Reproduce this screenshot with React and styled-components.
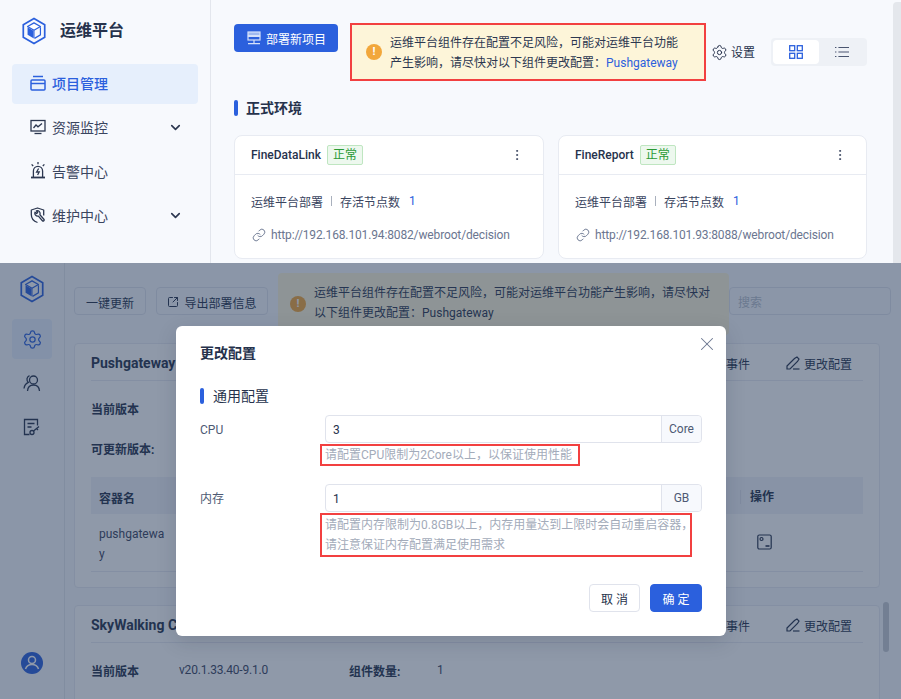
import React from "react";
import styled, { createGlobalStyle } from "styled-components";
import { Settings, ChevronDown, EllipsisVertical, Link, X, SquareArrowOutUpRight } from "lucide-react";

const GlobalStyle = createGlobalStyle`
  html, body { margin: 0; padding: 0; background: #fff; }
  body { font-family: Roboto, "Noto Sans CJK SC", "Noto Sans", sans-serif; font-size: 12px; color: #1f2a44; overflow: hidden; }
  * { box-sizing: border-box; }
`;

const Logo = () => (
  <svg width="24" height="28" viewBox="0 0 28 32">
    <path d="M14 1.5 26.5 8.7v14.6L14 30.5 1.5 23.3V8.7z" fill="none" stroke="#2b60dd" strokeWidth="2" />
    <path d="M14 6.5 21.5 10.8 14 15.2 6.5 10.8z" fill="#fff" stroke="#2b60dd" strokeWidth="1.4" strokeLinejoin="round" />
    <path d="M6.5 11.5 13.4 15.6v9L6.500 20.500z" fill="#2b60dd" />
    <path d="M21.5 11.5v9L14.6 24.6" fill="none" stroke="#2b60dd" strokeWidth="1.4" />
    <path d="M14 15.5v9" stroke="#2b60dd" strokeWidth="1.2" />
  </svg>
);

const ProjectIcon = () => (
  <svg width="16" height="16" viewBox="0 0 16 16" fill="none" stroke="#2b60dd" strokeWidth="1.5">
    <path d="M3 1.500h10" />
    <rect x="1" y="5" width="14" height="10" rx="1" />
    <path d="M1 8.500h14" />
  </svg>
);

const MonitorIcon = () => (
  <svg width="16" height="16" viewBox="0 0 16 16" fill="none" stroke="#2c3750" strokeWidth="1.3">
    <rect x="1" y="1.500" width="14" height="10.500" />
    <path d="M3.500 9 6 6l2 1.800L12 4.500" />
    <path d="M4.500 14.500h7" />
  </svg>
);

const AlarmIcon = () => (
  <svg width="16" height="18" viewBox="0 0 16 18" fill="none" stroke="#2c3750" strokeWidth="1.3">
    <path d="M8 0v2.200M1.600 2.400l1.600 1.600M14.400 2.400l-1.600 1.600" />
    <path d="M3.400 15V9a4.600 4.600 0 0 1 9.200 0v6" />
    <path d="M1 15.500h14" strokeWidth="1.800" />
    <path d="M8.600 6.500 6.600 10h2.600l-1.600 3" />
  </svg>
);

const MaintainIcon = () => (
  <svg width="16" height="17" viewBox="0 0 16 17" fill="none" stroke="#2c3750" strokeWidth="1.3" strokeLinejoin="round">
    <path d="M7.500 15.500C3.800 14.400 1.300 11.600 1.300 7.600V3L7.500 1l6.200 2v5.500" />
    <path d="M5 5.200a2.900 2.900 0 0 0 3.400 3.900l4 4.600c.9.900 2.400-.4 1.500-1.400l-4-4.600A2.900 2.900 0 0 0 6.400 3.800l1.300 1.800-1.100 1z" />
  </svg>
);

const ServerIcon = () => (
  <svg width="14" height="14" viewBox="0 0 14 14" fill="none" stroke="#d5e1fa" strokeWidth="1.2">
    <rect x="1" y="1" width="12" height="3.600" fill="#9fb9f0" />
    <rect x="1" y="5.400" width="12" height="3.600" />
    <path d="M7 9v3M1 12.600h12" />
  </svg>
);

const GridIcon = () => (
  <svg width="14" height="14" viewBox="0 0 14 14" fill="none" stroke="#2b60dd" strokeWidth="1.3">
    <rect x="0.700" y="0.700" width="5" height="5" />
    <rect x="8.300" y="0.700" width="5" height="5" />
    <rect x="0.700" y="8.300" width="5" height="5" />
    <rect x="8.300" y="8.300" width="5" height="5" />
  </svg>
);

const ListIcon = () => (
  <svg width="14" height="12" viewBox="0 0 14 12" fill="none" stroke="#4a5570" strokeWidth="1.1">
    <path d="M3.400 1.500H14M3.400 6H14M3.400 10.500H14" />
    <path d="M0 1.500h1.400M0 6h1.400M0 10.500h1.400" />
  </svg>
);

const UsersIcon = () => (
  <svg width="18" height="18" viewBox="0 0 18 18" fill="none" stroke="#26324c" strokeWidth="1.300">
    <circle cx="10.500" cy="6" r="4" />
    <path d="M4.500 17c.3-3.800 2.700-6 6-6s5.700 2.200 6 6" />
    <path d="M6.500 1.600A4 4 0 0 0 5.400 8.400C3 9.400 1.400 11.600 1 14.500" />
  </svg>
);

const DocKeyIcon = () => (
  <svg width="18" height="18" viewBox="0 0 18 18" fill="none" stroke="#26324c" strokeWidth="1.300">
    <path d="M6.500 16.500H1.500v-15h13v6" />
    <path d="M4.500 5.500h7M4.500 9h4" />
    <circle cx="9" cy="14.500" r="2" />
    <path d="M10.500 13 16 8.500M13.500 10.500l1.500 1.500" />
  </svg>
);

const PencilIcon = () => (
  <svg width="14" height="14" viewBox="0 0 14 14" fill="none" stroke="#26324c" strokeWidth="1.200">
    <path d="M1 10 8.500 2.500 11 1l2 2-1.500 2.500L4 13H1z" />
    <path d="M7 13h6.500" />
  </svg>
);

const TerminalIcon = () => (
  <svg width="15" height="16" viewBox="0 0 15 16" fill="none" stroke="#26324c" strokeWidth="1.200">
    <rect x="0.800" y="1" width="13.400" height="14" rx="1.500" />
    <circle cx="4.500" cy="5" r="1.500" />
    <path d="M8.500 12h4" strokeWidth="1.600" />
  </svg>
);

const UserBadge = () => (
  <svg width="22" height="22" viewBox="0 0 22 22">
    <circle cx="11" cy="11" r="11" fill="#2b60dd" />
    <circle cx="11" cy="8" r="3.500" fill="none" stroke="#fff" strokeWidth="1.500" />
    <path d="M4.500 17c1-3 3.500-4.500 6.500-4.500s5.500 1.500 6.500 4.500" fill="none" stroke="#fff" strokeWidth="1.500" />
  </svg>
);

const Shot = styled.div`
  position: relative;
  display: flex;
  height: ${(p) => p.$height}px;
  overflow: hidden;
  background: #f7f9fd;
`;

const Sidebar = styled.aside`
  width: 211px;
  flex: none;
  border-right: 1px solid #e3e6ed;
  padding: 17px 12px 0;
`;

const Brand = styled.div`
  display: flex;
  align-items: center;
  gap: 14px;
  height: 27px;
  padding-left: 10px;
  margin-bottom: 20px;
  font-size: 16px;
  font-weight: 700;
  color: #26324c;
`;

const BrandName = styled.span`
  margin-top: -3px;
`;

const NavItem = styled.div`
  display: flex;
  align-items: center;
  height: 40px;
  margin-bottom: 4px;
  padding: 0 15px 2px 18px;
  gap: 6px;
  font-size: 14px;
  border-radius: 4px;
  color: ${(p) => (p.$active ? "#2b60dd" : "#3a455f")};
  background: ${(p) => (p.$active ? "#e6effc" : "transparent")};
  font-weight: ${(p) => (p.$active ? 500 : 400)};
  span { flex: 1; }
`;

const Main = styled.main`
  flex: 1;
  padding: 23px 34px 0 23px;
  min-width: 0;
`;

const Toolbar = styled.div`
  display: flex;
  align-items: flex-start;
`;

const PrimaryButton = styled.button`
  display: flex;
  align-items: center;
  gap: 5px;
  width: 104px;
  height: 28px;
  margin-top: 1px;
  padding: 0 0 0 13px;
  border: 0;
  border-radius: 4px;
  background: #2b60dd;
  color: #fff;
  font: inherit;
`;

const WarnMark = styled.div`
  width: 16px;
  height: 16px;
  flex: none;
  border-radius: 50%;
  background: #f2a73b;
  color: #fff;
  font-size: 11px;
  font-weight: 700;
  line-height: 16px;
  text-align: center;
`;

const WarnBox = styled.div`
  width: 356px;
  height: 58px;
  margin-left: 12px;
  display: flex;
  align-items: center;
  gap: 8px;
  padding-left: 14px;
  background: #fdf5d9;
  border: 2px solid #f24040;
  line-height: 20px;
  color: #2c3750;
  a { color: #2b60dd; }
  div + div { padding-top: 2px; }
`;

const SettingsLink = styled.div`
  display: flex;
  flex: none;
  align-items: center;
  gap: 3px;
  margin: 21px 0 0 5px;
  line-height: 16px;
  white-space: nowrap;
  color: #26324c;
`;

const Toggle = styled.div`
  display: flex;
  flex: none;
  width: 96px;
  height: 28px;
  margin: 15px 0 0 16px;
  padding: 2px;
  background: #eef1f6;
  border-radius: 4px;
`;

const ToggleItem = styled.div`
  flex: 1;
  display: flex;
  align-items: center;
  justify-content: center;
  border-radius: 4px;
  background: ${(p) => (p.$active ? "#fff" : "transparent")};
`;

const SectionTitle = styled.div`
  display: flex;
  align-items: center;
  gap: ${(p) => (p.$plain ? 9 : 8)}px;
  margin-top: ${(p) => p.$top || 0}px;
  font-size: 14px;
  line-height: 20px;
  font-weight: ${(p) => (p.$plain ? 400 : 700)};
  color: #26324c;
  &::before {
    content: "";
    width: 4px;
    height: 16px;
    border-radius: 2px;
    background: #2b60dd;
  }
`;

const Cards = styled.div`
  display: grid;
  grid-template-columns: 310px 309px;
  gap: 14px;
  margin-top: 17px;
`;

const Card = styled.section`
  height: 124px;
  background: #fff;
  border: 1px solid #e8ebf2;
  border-radius: 8px;
`;

const CardHead = styled.div`
  display: flex;
  align-items: center;
  gap: 6px;
  height: 39px;
  padding: 0 19px 0 16px;
  border-bottom: 1px solid #e8ebf2;
  color: #26324c;
  font-weight: 500;
  svg { margin-left: auto; }
`;

const Tag = styled.span`
  padding: 0 5px;
  height: 20px;
  line-height: 18px;
  border: 1px solid #bfe6c1;
  border-radius: 2px;
  background: #edf8ee;
  color: #2a9a35;
  font-weight: 400;
`;

const CardRow = styled.div`
  display: flex;
  align-items: center;
  height: 20px;
  margin: 16px 16px 0;
  color: #3a455f;
  i { width: 1px; height: 10px; margin: 0 8px; background: #a9b0bd; }
  b { margin-left: 9px; font-weight: 400; color: #2b60dd; }
`;

const CardLink = styled.div`
  display: flex;
  align-items: center;
  gap: 5px;
  margin: 14px 16px 0 17px;
  line-height: 20px;
  letter-spacing: -0.14px;
  color: #6b7690;
  white-space: nowrap;
`;

const Scrollbar = styled.div`
  position: absolute;
  top: 2px;
  right: 0;
  bottom: 0;
  width: 8px;
  background: #e4e7ec;
  border-radius: 4px 0 0 0;
`;

const MiniSide = styled.aside`
  width: 65px;
  flex: none;
  display: flex;
  flex-direction: column;
  align-items: center;
  border-right: 1px solid #e3e6ed;
  padding-top: 12px;
  padding-bottom: 25px;
`;

const MiniLogo = styled.div`
  margin-bottom: 16px;
  svg { display: block; }
`;

const MiniItem = styled.div`
  width: 40px;
  height: 40px;
  margin-bottom: 4px;
  display: flex;
  align-items: center;
  justify-content: center;
  border-radius: 4px;
  background: ${(p) => (p.$active ? "#e6effc" : "transparent")};
`;

const UserSlot = styled.div`
  margin-top: auto;
  line-height: 0;
`;

const Content = styled.div`
  flex: 1;
  min-width: 0;
  padding: 10px 10px 0 9px;
`;

const ActionBar = styled.div`
  display: flex;
  align-items: flex-start;
  gap: 10px;
  height: 70px;
`;

const GhostButton = styled.button`
  display: flex;
  align-items: center;
  justify-content: center;
  gap: 5px;
  width: ${(p) => p.$width}px;
  height: 28px;
  margin-top: 14px;
  padding: 2px 0 0;
  border: 1px solid #dfe3ec;
  border-radius: 4px;
  background: #f7f9fd;
  color: #26324c;
  font: inherit;
`;

const WideWarn = styled.div`
  display: flex;
  align-items: center;
  gap: 8px;
  width: 451px;
  height: 62px;
  margin-right: -10px;
  padding: 0 12px;
  border-radius: 4px;
  background: #fdf5d9;
  color: #2c3750;
  line-height: 20px;
  div + div { padding-bottom: 2px; }
`;

const Search = styled.div`
  width: 162px;
  height: 28px;
  margin-top: 14px;
  padding-left: 8px;
  line-height: 30px;
  border: 1px solid #dfe3ec;
  border-radius: 4px;
  color: #b8bfcc;
  background: #f7f9fd;
`;

const Panel = styled.section`
  width: 806px;
  height: ${(p) => p.$height}px;
  margin-bottom: 17px;
  padding: 0 16px;
  background: #fff;
  border: 1px solid #e8ebf2;
  border-radius: 4px;
`;

const PanelHead = styled.div`
  display: flex;
  align-items: center;
  height: 37px;
  padding: 2px 11px 0 0;
  border-bottom: 1px solid #e8ebf2;
  font-size: 14px;
  font-weight: 700;
  color: #26324c;
`;

const PanelAction = styled.div`
  display: flex;
  align-items: center;
  gap: 4px;
  font-size: 12px;
  font-weight: 400;
  margin-left: ${(p) => p.$left};
`;

const InfoRow = styled.div`
  display: flex;
  align-items: center;
  height: 20px;
  margin-top: ${(p) => p.$top}px;
  color: #3a455f;
  strong { width: 88px; color: #26324c; }
  em { width: 170px; font-style: normal; letter-spacing: -0.2px; }
`;

const TableHead = styled.div`
  display: flex;
  align-items: center;
  height: 37px;
  margin-top: 19px;
  padding: 3px 0 0 8px;
  background: #f1f3f8;
  font-weight: 700;
  color: #26324c;
  span:first-child { width: 72px; }
  span:last-child { margin-left: auto; width: 123px; padding-left: 9px; border-left: 1px solid #dfe3ec; line-height: 14px; }
`;

const TableRow = styled.div`
  display: flex;
  align-items: center;
  justify-content: space-between;
  height: 58px;
  padding: 2px 91px 0 8px;
  border-bottom: 1px solid #e8ebf2;
  line-height: 20px;
  color: #3a455f;
  div { width: 66px; word-break: break-all; }
  svg { margin-top: -4px; }
`;

const ScrollThumb = styled.div`
  position: absolute;
  top: 339px;
  left: 883px;
  width: 6px;
  height: 50px;
  border-radius: 3px;
  background: #c6cbd3;
`;

const Overlay = styled.div`
  position: absolute;
  inset: 0;
  display: flex;
  justify-content: center;
  align-items: flex-start;
  padding: 63px 0 0 1px;
  background: rgba(31, 51, 83, 0.5);
`;

const Modal = styled.div`
  position: relative;
  width: 550px;
  height: 310px;
  padding: 17px 24px 0;
  background: #fff;
  border-radius: 6px;
  box-shadow: 0 6px 20px rgba(20, 30, 50, 0.15);
`;

const ModalTitle = styled.div`
  font-size: 14px;
  line-height: 20px;
  font-weight: 700;
  color: #26324c;
`;

const CloseButton = styled.div`
  position: absolute;
  top: 7px;
  right: 8px;
  line-height: 0;
  color: #6b7690;
`;

const Field = styled.div`
  display: grid;
  grid-template-columns: 125px 377px;
  margin-top: ${(p) => p.$top}px;
  color: #4e5a74;
`;

const FieldLabel = styled.div`
  padding-top: 1px;
  line-height: 28px;
`;

const InputGroup = styled.div`
  display: flex;
  height: 28px;
  border: 1px solid #e0e3ec;
  border-radius: 4px;
  color: #26324c;
`;

const InputValue = styled.div`
  flex: 1;
  padding: 1px 0 0 7px;
  line-height: 26px;
`;

const Addon = styled.div`
  width: 40px;
  text-align: center;
  line-height: 26px;
  border-left: 1px solid #e0e3ec;
  border-radius: 0 4px 4px 0;
  background: #f7f9fd;
  color: #4e5a74;
`;

const Hint = styled.div`
  width: ${(p) => p.$width}px;
  margin: 1px 0 0 -5px;
  padding: 0 0 0 3px;
  border: 2px solid #f24040;
  line-height: ${(p) => p.$line}px;
  color: #a3abba;
  white-space: nowrap;
`;

const ModalFooter = styled.div`
  position: absolute;
  right: 24px;
  bottom: 24px;
  display: flex;
  gap: 10px;
`;

const ModalButton = styled.button`
  width: ${(p) => p.$width}px;
  height: 28px;
  border-radius: 4px;
  font: inherit;
  letter-spacing: 3px;
  padding: 0 0 0 3px;
  border: 1px solid ${(p) => (p.$primary ? "#2b60dd" : "#e0e3ec")};
  background: ${(p) => (p.$primary ? "#2b60dd" : "#fff")};
  color: ${(p) => (p.$primary ? "#fff" : "#26324c")};
`;

const navItems = [
  { label: "项目管理", icon: <ProjectIcon />, active: true },
  { label: "资源监控", icon: <MonitorIcon />, more: true },
  { label: "告警中心", icon: <AlarmIcon /> },
  { label: "维护中心", icon: <MaintainIcon />, more: true },
];

const projects = [
  { name: "FineDataLink", url: "http://192.168.101.94:8082/webroot/decision" },
  { name: "FineReport", url: "http://192.168.101.93:8088/webroot/decision" },
];

const PanelActions = () => (
  <>
    <PanelAction $left="auto">事件</PanelAction>
    <PanelAction $left="36px">
      <PencilIcon />
      更改配置
    </PanelAction>
  </>
);

const App = () => {
  return (
    <>
      <GlobalStyle />
      <Shot $height={263}>
        <Sidebar>
          <Brand>
            <Logo />
            <BrandName>运维平台</BrandName>
          </Brand>
          {navItems.map((item) => (
            <NavItem key={item.label} $active={item.active}>
              {item.icon}
              <span>{item.label}</span>
              {item.more && <ChevronDown size={15} strokeWidth={2.6} color="#2c3750" />}
            </NavItem>
          ))}
        </Sidebar>
        <Main>
          <Toolbar>
            <PrimaryButton>
              <ServerIcon />
              部署新项目
            </PrimaryButton>
            <WarnBox>
              <WarnMark>!</WarnMark>
              <div>
                运维平台组件存在配置不足风险，可能对运维平台功能
                <br />
                产生影响，请尽快对以下组件更改配置：<a>Pushgateway</a>
              </div>
            </WarnBox>
            <SettingsLink>
              <Settings size={17} strokeWidth={1.4} />
              设置
            </SettingsLink>
            <Toggle>
              <ToggleItem $active>
                <GridIcon />
              </ToggleItem>
              <ToggleItem>
                <ListIcon />
              </ToggleItem>
            </Toggle>
          </Toolbar>
          <SectionTitle $top={17}>正式环境</SectionTitle>
          <Cards>
            {projects.map((p) => (
              <Card key={p.name}>
                <CardHead>
                  {p.name}
                  <Tag>正常</Tag>
                  <EllipsisVertical size={14} strokeWidth={1.6} color="#3a455f" />
                </CardHead>
                <CardRow>
                  运维平台部署<i />存活节点数<b>1</b>
                </CardRow>
                <CardLink>
                  <Link size={14} strokeWidth={1.6} color="#6b7690" />
                  {p.url}
                </CardLink>
              </Card>
            ))}
          </Cards>
        </Main>
        <Scrollbar />
      </Shot>

      <Shot $height={436}>
        <MiniSide>
          <MiniLogo>
            <Logo />
          </MiniLogo>
          <MiniItem $active>
            <Settings size={21} strokeWidth={1.4} color="#2b60dd" />
          </MiniItem>
          <MiniItem>
            <UsersIcon />
          </MiniItem>
          <MiniItem>
            <DocKeyIcon />
          </MiniItem>
          <UserSlot>
            <UserBadge />
          </UserSlot>
        </MiniSide>
        <Content>
          <ActionBar>
            <GhostButton $width={72}>一键更新</GhostButton>
            <GhostButton $width={112}>
              <SquareArrowOutUpRight size={12} />
              导出部署信息
            </GhostButton>
            <WideWarn>
              <WarnMark>!</WarnMark>
              <div>
                运维平台组件存在配置不足风险，可能对运维平台功能产生影响，请尽快对
                <br />
                以下组件更改配置：Pushgateway
              </div>
            </WideWarn>
            <Search>搜索</Search>
          </ActionBar>
          <Panel $height={245}>
            <PanelHead>
              Pushgateway
              <PanelActions />
            </PanelHead>
            <InfoRow $top={17}>
              <strong>当前版本</strong>
            </InfoRow>
            <InfoRow $top={20}>
              <strong>可更新版本:</strong>
            </InfoRow>
            <TableHead>
              <span>容器名</span>
              <span>操作</span>
            </TableHead>
            <TableRow>
              <div>pushgateway</div>
              <TerminalIcon />
            </TableRow>
          </Panel>
          <Panel $height={120}>
            <PanelHead>
              SkyWalking Collector
              <PanelActions />
            </PanelHead>
            <InfoRow $top={17}>
              <strong>当前版本</strong>
              <em>v20.1.33.40-9.1.0</em>
              <strong>组件数量:</strong>
              1
            </InfoRow>
          </Panel>
        </Content>
        <ScrollThumb />
        <Overlay>
          <Modal>
            <ModalTitle>更改配置</ModalTitle>
            <CloseButton>
              <X size={22} strokeWidth={1.1} />
            </CloseButton>
            <SectionTitle $top={23} $plain>通用配置</SectionTitle>
            <Field $top={9}>
              <FieldLabel>CPU</FieldLabel>
              <div>
                <InputGroup>
                  <InputValue>3</InputValue>
                  <Addon>Core</Addon>
                </InputGroup>
                <Hint $width={260} $line={18}>请配置CPU限制为2Core以上，以保证使用性能</Hint>
              </div>
            </Field>
            <Field $top={18}>
              <FieldLabel>内存</FieldLabel>
              <div>
                <InputGroup>
                  <InputValue>1</InputValue>
                  <Addon>GB</Addon>
                </InputGroup>
                <Hint $width={372} $line={20}>
                  请配置内存限制为0.8GB以上，内存用量达到上限时会自动重启容器，
                  <br />
                  请注意保证内存配置满足使用需求
                </Hint>
              </div>
            </Field>
            <ModalFooter>
              <ModalButton $width={51}>取消</ModalButton>
              <ModalButton $width={52} $primary>确定</ModalButton>
            </ModalFooter>
          </Modal>
        </Overlay>
      </Shot>
    </>
  );
};

export default App;
